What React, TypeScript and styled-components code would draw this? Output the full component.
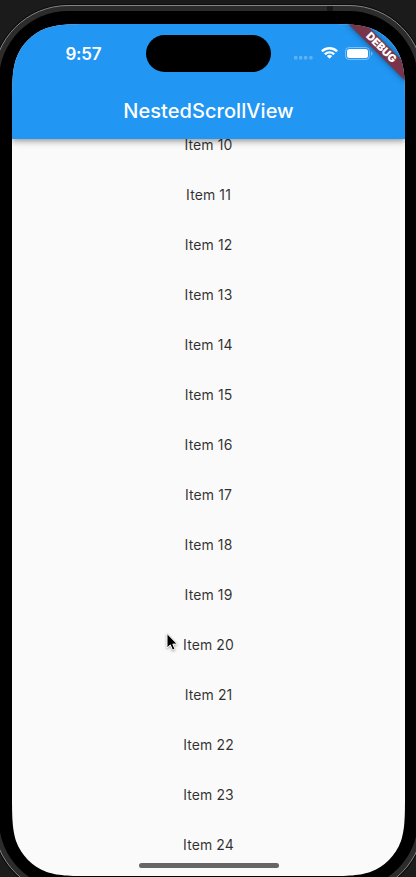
import React from "react";
import styled, { createGlobalStyle } from "styled-components";

const GlobalStyle = createGlobalStyle`
  * { box-sizing: border-box; }
  html, body { margin: 0; background: #1b1b1b; overflow: hidden; }
`;

const R = 55;
const W = 393;
const H = 852;
// Continuous-curvature corners of the display.
const corner = (fx: (n: number) => number, fy: (n: number) => number, rev: boolean) => {
  const p = [
    [1.5287, 0], [1.0885, 0], [0.8684, 0], [0.6315, 0.0749],
    [0.3728, 0.1691], [0.1691, 0.3728], [0.0749, 0.6315],
    [0, 0.8684], [0, 1.0885], [0, 1.5287],
  ].map(([x, y]) => `${fx(x * R).toFixed(2)} ${fy(y * R).toFixed(2)}`);
  const q = rev ? p.slice().reverse() : p;
  return `L${q[0]} C${q.slice(1).join(" ")}`;
};
const near = (n: number) => n;
const farX = (n: number) => W - n;
const farY = (n: number) => H - n;
const screenPath =
  ("M" + corner(farX, near, false).slice(1) +
    corner(farX, farY, true) +
    corner(near, farY, false) +
    corner(near, near, true) + "Z");

const Desktop = styled.main`
  width: 416px;
  height: 877px;
  overflow: hidden;
  padding-top: 5px;
  background: linear-gradient(180deg, #1b1b1b 0%, #202020 50%, #292b2d 97%, #1c1c1d 98%);
  font-family: Inter, "Liberation Sans", sans-serif;
`;

const Rim = styled.div`
  width: 431px;
  height: 890px;
  margin-left: -7px;
  padding: 5px;
  border: 1px solid #858585;
  border-radius: 75px;
  background: #2c2c2c;
  box-shadow: 0 0 0 1px #0c0c0c;
  position: relative;
`;

const AntennaBand = styled.span`
  position: absolute;
  left: 333px;
  top: 0;
  width: 6px;
  height: 5px;
  background: #191919;
`;

const Bezel = styled.div`
  width: 419px;
  height: 878px;
  padding: 13px;
  border-radius: 69px;
  background: #000;
`;

const Screen = styled.div`
  position: relative;
  width: 393px;
  height: 852px;
  overflow: hidden;
  background: #fafafa;
  clip-path: path("${screenPath}");
  display: flex;
  flex-direction: column;
`;

const AppBar = styled.header`
  position: relative;
  z-index: 1;
  flex: 0 0 115px;
  background: #2196f3;
  color: #fff;
  box-shadow: 0 2px 4px -1px rgba(0, 0, 0, 0.2), 0 4px 5px rgba(0, 0, 0, 0.14), 0 1px 10px rgba(0, 0, 0, 0.12);
`;

const StatusBar = styled.div`
  height: 59px;
  display: grid;
  grid-template-columns: 134px 125px 1fr;
`;

const Clock = styled.time`
  padding: 20px 0 0 53.5px;
  font-size: 17px;
  line-height: 20px;
  font-weight: 600;
  letter-spacing: -0.25px;
`;

const Island = styled.div`
  margin-top: 11px;
  height: 37px;
  border-radius: 19px;
  background: #000;
`;

const Indicators = styled.svg`
  display: block;
  width: 90px;
  height: 20px;
  margin: 20px 0 0 19px;
`;

const Title = styled.h1`
  margin: 0;
  height: 56px;
  text-align: center;
  font-size: 20px;
  line-height: 56px;
  font-weight: 500;
  letter-spacing: 0.06px;
`;

const List = styled.ul`
  margin: -20px 0 0;
  padding: 0;
  list-style: none;
`;

const Item = styled.li`
  height: 50px;
  display: flex;
  align-items: center;
  justify-content: center;
  font-size: 14px;
  letter-spacing: 0.1px;
  color: rgba(0, 0, 0, 0.82);
`;

const DebugBanner = styled.div`
  position: absolute;
  z-index: 2;
  left: 353px;
  top: 28px;
  width: 80px;
  height: 12px;
  transform-origin: 40px -28px;
  transform: rotate(45deg);
  background: linear-gradient(rgba(183, 28, 28, 0.627), rgba(183, 28, 28, 0.627)), rgba(0, 0, 0, 0.38);
  box-shadow: 0 0 6px rgba(0, 0, 0, 0.45);
  color: #fff;
  font: 900 10.8px/11px Inter, sans-serif;
  text-align: center;
`;

const HomeIndicator = styled.span`
  position: absolute;
  left: 127px;
  bottom: 8px;
  width: 140px;
  height: 5px;
  border-radius: 3px;
  background: #666;
`;

const Pointer = styled.svg`
  position: absolute;
  left: 152px;
  top: 607px;
  width: 16px;
  height: 24px;
  filter: drop-shadow(0 1px 1px rgba(0, 0, 0, 0.35));
`;

const items = Array.from({ length: 15 }, (_, i) => i + 10);

export default function App() {
  return (
    <Desktop>
      <GlobalStyle />
      <Rim>
        <AntennaBand />
        <Bezel>
          <Screen>
            <AppBar>
              <StatusBar>
                <Clock>9:57</Clock>
                <Island />
                <Indicators viewBox="0 0 90 20">
                  <g fill="#fff" fillOpacity="0.28">
                    <rect x="4" y="12" width="3.4" height="3.4" rx="1" />
                    <rect x="9" y="12" width="3.4" height="3.4" rx="1" />
                    <rect x="14" y="12" width="3.4" height="3.4" rx="1" />
                    <rect x="19.2" y="12" width="3.4" height="3.4" rx="1" />
                  </g>
                  <g transform="translate(31 3)" fill="#fff">
                    <path d="M8.5 2.5c2.4 0 4.700.9 6.450 2.550a.33.33 0 0 0 .47 0l1.250-1.250a.36.36 0 0 0 0-.52C12.100-1.050 4.900-1.050.33 3.280a.36.36 0 0 0 0 .52l1.250 1.250c.13.13.34.13.47 0C3.800 3.400 6.100 2.500 8.500 2.500Z" />
                    <path d="M8.500 6.600c1.300 0 2.570.5 3.540 1.370.13.13.34.13.47 0l1.250-1.250a.36.36 0 0 0 0-.52 7.730 7.730 0 0 0-10.520 0 .36.36 0 0 0 0 .52l1.250 1.250c.13.13.34.13.47 0A5.300 5.300 0 0 1 8.500 6.600Z" />
                    <path d="M10.950 9.350c.14-.14.14-.36-.01-.5a3.800 3.800 0 0 0-4.880 0c-.15.14-.15.36-.01.5l2.200 2.200c.14.13.36.13.5 0Z" />
                  </g>
                  <rect x="55.500" y="3.500" width="24" height="12" rx="3.600" fill="none" stroke="#fff" strokeOpacity="0.4" />
                  <rect x="57" y="5" width="21" height="9" rx="2.500" fill="#fff" />
                  <path d="M81.200 7.500v4c.8-.35 1.300-1.100 1.300-2s-.5-1.650-1.300-2Z" fill="#fff" fillOpacity="0.45" />
                </Indicators>
              </StatusBar>
              <Title>NestedScrollView</Title>
            </AppBar>
            <List>
              {items.map((n) => (
                <Item key={n}>Item {n}</Item>
              ))}
            </List>
            <DebugBanner>DEBUG</DebugBanner>
            <HomeIndicator />
            <Pointer viewBox="0 0 16 24">
              <path
                d="M3 2.500V17l3.300-3.100 2.200 5.200 2.500-1-2.200-5h4.500Z"
                fill="#000"
                stroke="#fff"
                strokeWidth="1"
              />
            </Pointer>
          </Screen>
        </Bezel>
      </Rim>
    </Desktop>
  );
}
